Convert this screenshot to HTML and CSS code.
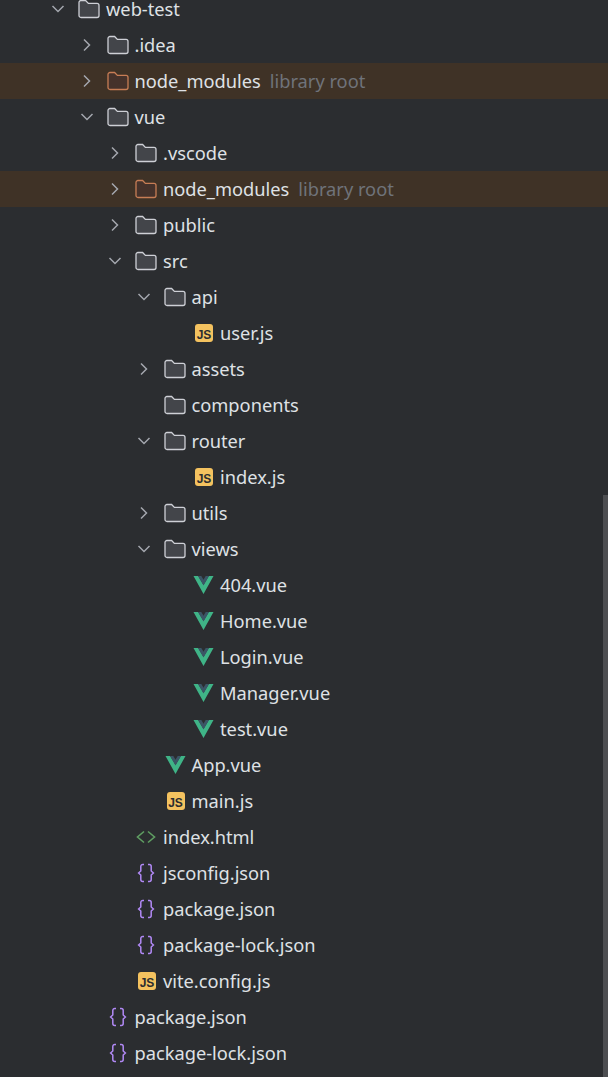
FILE: index.html
```html
<!DOCTYPE html>
<html>
<head>
    <title>Project</title>
    <link rel="stylesheet" href="styles.css">
</head>
<body>
    <svg class="defs" width="0" height="0">
        <symbol id="right" viewBox="0 0 16 16"><path d="M5 2.5 10.5 8 5 13.5" fill="none" stroke="currentColor" stroke-width="1.5"/></symbol>
        <symbol id="down" viewBox="0 0 16 16"><path d="M2.5 5 8 10.5 13.5 5" fill="none" stroke="currentColor" stroke-width="1.5"/></symbol>
        <symbol id="folder" viewBox="0 0 22 20"><path d="M1 3.5A2 2 0 0 1 3 1.5H7.6L10.4 4.4H19A2 2 0 0 1 21 6.4V16.5A2 2 0 0 1 19 18.5H3A2 2 0 0 1 1 16.5Z" fill="var(--fill)" stroke="var(--line)" stroke-width="1.3"/></symbol>
        <symbol id="vue" viewBox="0 0 22 20"><path d="M1.5 1H6.2L11.5 10 16.8 1H21.5L11.5 19Z" fill="#3fb487"/><path d="M6 1H9.3L11.5 4.8 13.7 1H17L11.5 10.4Z" fill="#3b5566"/></symbol>
        <symbol id="html" viewBox="0 0 22 16"><path d="M9 2.5 2.5 8 9 13.5M13 2.5 19.5 8 13 13.5" fill="none" stroke="#5f9e62" stroke-width="1.6"/></symbol>
        <symbol id="json" viewBox="0 0 20 20"><path d="M8 1.5H6.8A2 2 0 0 0 4.8 3.5V8L2.600 10 4.800 12V16.500A2 2 0 0 0 6.800 18.500H8M12 1.500H13.200A2 2 0 0 1 15.200 3.500V8L17.400 10 15.200 12V16.500A2 2 0 0 1 13.200 18.500H12" fill="none" stroke="#b189f5" stroke-width="1.500"/></symbol>
    </svg>

    <div class="tree">
        <div class="row lv0"><svg class="arrow"><use href="#down"/></svg><svg class="icon"><use href="#folder"/></svg><span class="name">web-test</span></div>
        <div class="row lv1"><svg class="arrow"><use href="#right"/></svg><svg class="icon"><use href="#folder"/></svg><span class="name">.idea</span></div>
        <div class="row lv1 excluded"><svg class="arrow"><use href="#right"/></svg><svg class="icon"><use href="#folder"/></svg><span class="name">node_modules</span><span class="hint">library root</span></div>
        <div class="row lv1"><svg class="arrow"><use href="#down"/></svg><svg class="icon"><use href="#folder"/></svg><span class="name">vue</span></div>
        <div class="row lv2"><svg class="arrow"><use href="#right"/></svg><svg class="icon"><use href="#folder"/></svg><span class="name">.vscode</span></div>
        <div class="row lv2 excluded"><svg class="arrow"><use href="#right"/></svg><svg class="icon"><use href="#folder"/></svg><span class="name">node_modules</span><span class="hint">library root</span></div>
        <div class="row lv2"><svg class="arrow"><use href="#right"/></svg><svg class="icon"><use href="#folder"/></svg><span class="name">public</span></div>
        <div class="row lv2"><svg class="arrow"><use href="#down"/></svg><svg class="icon"><use href="#folder"/></svg><span class="name">src</span></div>
        <div class="row lv3"><svg class="arrow"><use href="#down"/></svg><svg class="icon"><use href="#folder"/></svg><span class="name">api</span></div>
        <div class="row lv4"><span class="arrow"></span><span class="icon js">JS</span><span class="name">user.js</span></div>
        <div class="row lv3"><svg class="arrow"><use href="#right"/></svg><svg class="icon"><use href="#folder"/></svg><span class="name">assets</span></div>
        <div class="row lv3"><span class="arrow"></span><svg class="icon"><use href="#folder"/></svg><span class="name">components</span></div>
        <div class="row lv3"><svg class="arrow"><use href="#down"/></svg><svg class="icon"><use href="#folder"/></svg><span class="name">router</span></div>
        <div class="row lv4"><span class="arrow"></span><span class="icon js">JS</span><span class="name">index.js</span></div>
        <div class="row lv3"><svg class="arrow"><use href="#right"/></svg><svg class="icon"><use href="#folder"/></svg><span class="name">utils</span></div>
        <div class="row lv3"><svg class="arrow"><use href="#down"/></svg><svg class="icon"><use href="#folder"/></svg><span class="name">views</span></div>
        <div class="row lv4"><span class="arrow"></span><svg class="icon"><use href="#vue"/></svg><span class="name">404.vue</span></div>
        <div class="row lv4"><span class="arrow"></span><svg class="icon"><use href="#vue"/></svg><span class="name">Home.vue</span></div>
        <div class="row lv4"><span class="arrow"></span><svg class="icon"><use href="#vue"/></svg><span class="name">Login.vue</span></div>
        <div class="row lv4"><span class="arrow"></span><svg class="icon"><use href="#vue"/></svg><span class="name">Manager.vue</span></div>
        <div class="row lv4"><span class="arrow"></span><svg class="icon"><use href="#vue"/></svg><span class="name">test.vue</span></div>
        <div class="row lv3"><span class="arrow"></span><svg class="icon"><use href="#vue"/></svg><span class="name">App.vue</span></div>
        <div class="row lv3"><span class="arrow"></span><span class="icon js">JS</span><span class="name">main.js</span></div>
        <div class="row lv2"><span class="arrow"></span><svg class="icon"><use href="#html"/></svg><span class="name">index.html</span></div>
        <div class="row lv2"><span class="arrow"></span><svg class="icon"><use href="#json"/></svg><span class="name">jsconfig.json</span></div>
        <div class="row lv2"><span class="arrow"></span><svg class="icon"><use href="#json"/></svg><span class="name">package.json</span></div>
        <div class="row lv2"><span class="arrow"></span><svg class="icon"><use href="#json"/></svg><span class="name">package-lock.json</span></div>
        <div class="row lv2"><span class="arrow"></span><span class="icon js">JS</span><span class="name">vite.config.js</span></div>
        <div class="row lv1"><span class="arrow"></span><svg class="icon"><use href="#json"/></svg><span class="name">package.json</span></div>
        <div class="row lv1"><span class="arrow"></span><svg class="icon"><use href="#json"/></svg><span class="name">package-lock.json</span></div>
    </div>

    <div class="scrollbar"></div>
</body>
</html>
```

FILE: styles.css
```css
html, body {
    height: 100%;
}
body {
    margin: 0;
    overflow: hidden;
    background-color: #2b2d30;
    color: #dfe1e5;
    font-family: "Noto Sans", Arial, sans-serif;
    font-size: 18.25px;
}
.defs {
    display: block;
    height: 0;
}
.tree {
    margin-top: -9px;
}
.row {
    display: flex;
    align-items: center;
    height: 36px;
    --fill: #43454a;
    --line: #ced0d6;
}
.lv0 { padding-left: 50px; }
.lv1 { padding-left: 78.5px; }
.lv2 { padding-left: 107px; }
.lv3 { padding-left: 135.5px; }
.lv4 { padding-left: 164px; }
.excluded {
    background-color: #3f3226;
    --fill: #45322b;
    --line: #c77d55;
}
.arrow {
    flex: none;
    width: 16px;
    height: 16px;
    margin-right: 12px;
    color: #a4a7ae;
}
.icon {
    flex: none;
    width: 22px;
    height: 20px;
    margin-right: 6px;
}
.js {
    box-sizing: border-box;
    width: 18px;
    height: 18px;
    margin-left: 3px;
    margin-right: 7px;
    padding-top: 5px;
    border-radius: 3px;
    background-color: #f4c25f;
    color: #2b2d30;
    font-family: "Liberation Sans", Arial, sans-serif;
    font-size: 12px;
    font-weight: 700;
    line-height: 13px;
    text-align: center;
}
.name {
    line-height: 18px;
    white-space: nowrap;
}
.hint {
    margin-left: 9px;
    color: #6f737a;
    line-height: 18px;
    white-space: nowrap;
}
.scrollbar {
    position: absolute;
    top: 495px;
    right: 0;
    bottom: 0;
    width: 5px;
    background-color: #4d4e51;
}
```
